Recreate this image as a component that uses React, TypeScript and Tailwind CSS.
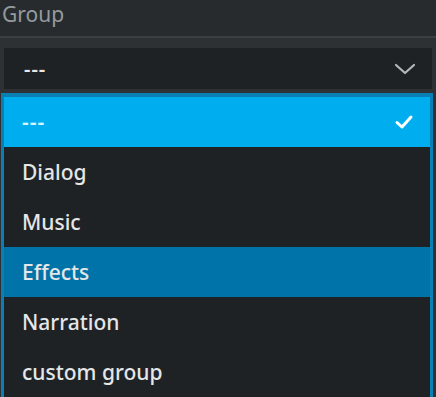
import React from "react";

const items = ["---", "Dialog", "Music", "Effects", "Narration", "custom group"];

export default function App() {
  const font = { fontFamily: '"Noto Sans", "Open Sans", sans-serif' };
  return (
    <div className="w-[436px] h-[397px] overflow-hidden bg-[#272b2e] flex flex-col" style={font}>
      <div className="h-[36px] pl-[2px] pt-[1px] flex items-start shrink-0">
        <span className="text-[21px] leading-[26px] text-[#959b9f]">Group</span>
      </div>
      <div className="h-[2px] bg-[#3a3f43] shrink-0" />
      <div className="bg-[#2d3134] pt-[10px] px-[4px] shrink-0">
        <div className="h-[41px] bg-[#1f2225] flex items-center justify-between pl-[20px] pr-[16px]">
          <span className="text-[20px] text-[#e8e8e8] leading-none font-semibold tracking-[1px]">---</span>
          <svg width="22" height="14" viewBox="0 0 22 14" fill="none">
            <path d="M2 3 L11 11 L20 3" stroke="#b4b8bb" strokeWidth="2.2" strokeLinecap="round" strokeLinejoin="round" />
          </svg>
        </div>
      </div>
      <div className="bg-[#2d3134] pt-[4px] pl-[1px] pr-[3px] flex-1 min-h-0">
        <div className="border-[3px] border-t-[4px] border-[#0a7fb4] bg-[#1f2225] h-full">
          {items.map((it, i) => {
            const bg =
              i === 0 ? "bg-[#00aef0]" : i === 3 ? "bg-[#0074a8]" : "bg-[#1f2225]";
            const color = i === 0 ? "text-[#d9f3ff]" : "text-[#e4e6e7]";
            return (
              <div
                key={it}
                className={`h-[50px] shrink-0 flex items-center justify-between pl-[18px] pr-[16px] ${bg}`}
              >
                <span className={`text-[21px] leading-none font-medium ${color} ${i === 0 ? "font-semibold tracking-[1px]" : ""}`}>
                  {it}
                </span>
                {i === 0 && (
                  <svg width="20" height="16" viewBox="0 0 20 16" fill="none">
                    <path d="M3 8.5 L8 13 L17 3" stroke="#ffffff" strokeWidth="3" strokeLinecap="round" strokeLinejoin="round" />
                  </svg>
                )}
              </div>
            );
          })}
        </div>
      </div>
    </div>
  );
}
